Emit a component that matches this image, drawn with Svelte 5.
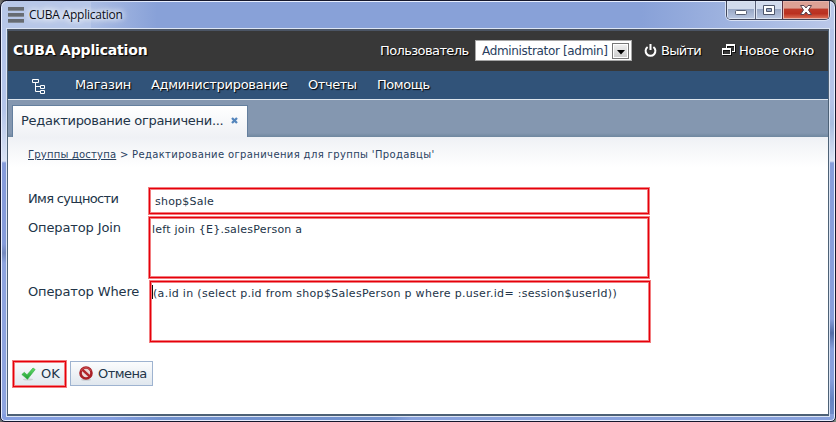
<script>
  const menu = [
    { label: 'Магазин', width: 76, spacing: -0.25 },
    { label: 'Администрирование', width: 157, spacing: -0.28 },
    { label: 'Отчеты', width: 69, spacing: -0.45 },
    { label: 'Помощь', width: 60, spacing: -0.45 }
  ];
</script>

<div class="desktop">
  <div class="window">
    <header class="titlebar">
      <div class="burger"><i></i><i></i><i></i></div>
      <span class="caption">CUBA Application</span>
      <div class="controls">
        <div class="ctl min"><svg width="14" height="14"><rect x="1.5" y="7.5" width="11" height="4" rx="1" fill="#fff" stroke="#555d70" /></svg></div>
        <div class="ctl max"><svg width="14" height="14"><path fill="#fff" stroke="#4e566b" fill-rule="evenodd" d="M1.5 2.5h11v9h-11zM4.5 5.5v3h5v-3z" /></svg></div>
        <div class="ctl close"><svg width="14" height="14"><path fill="#fff" stroke="#594450" stroke-linejoin="round" d="M1.5 2.5H5L7 5l2-2.500h3.500L9.500 7l3 4.500H9L7 9l-2 2.500H1.500L4.500 7z" /></svg></div>
      </div>
    </header>
    <main class="client">
      <div class="head">
        <strong>CUBA Application</strong>
        <span class="userlabel">Пользователь</span>
        <div class="select">
          <span>Administrator [admin]</span>
          <div class="arrow"><svg width="8" height="5"><path d="M0 0h8L4 4.500z" fill="#000" /></svg></div>
        </div>
        <svg class="power" width="13" height="15" fill="none" stroke="#fff" stroke-width="2"><path d="M3.600 4A4.900 4.900 0 1 0 9.400 4M6.500 1v6" /></svg>
        <span class="logout">Выйти</span>
        <svg class="newicon" width="14" height="12" fill="#fff" fill-rule="evenodd"><path d="M4 0h9v8h-3V7h2V2H5v2H4z" /><path d="M0 4h9v7H0zM1 6v4h7V6z" /></svg>
        <span class="newwin">Новое окно</span>
      </div>
      <nav>
        <svg class="tree" width="14" height="16" fill="none" stroke="#fff"><path d="M.5 1.500h6v3h-6zM3.500 4.500v9h5M3.500 8.500h5M8.500 7.500h4v3h-4zM8.500 12.500h4v3h-4z" /></svg>
        {#each menu as item}
          <span style="width: {item.width}px; letter-spacing: {item.spacing}px">{item.label}</span>
        {/each}
      </nav>
      <div class="tabs">
        <div class="tab">
          <span>Редактирование ограничени...</span>
          <svg width="7" height="7"><path d="M1 1l5 5M6 1L1 6" stroke="#5485bc" stroke-width="2.300" /></svg>
        </div>
      </div>
      <section class="editor">
        <div class="crumbs"><u>Группы доступа</u><b>&gt;</b><span>Редактирование ограничения для группы 'Продавцы'</span></div>
        <div class="row entity"><label for="entity">Имя сущности</label><div id="entity" class="field">shop$Sale</div></div>
        <div class="row join"><label for="join">Оператор Join</label><div id="join" class="field">left join &#123;E&#125;.salesPerson a</div></div>
        <div class="row where"><label for="where">Оператор Where</label><div id="where" class="field"><i class="caret"></i><span>(a.id in (select p.id from shop$SalesPerson p where p.user.id= :session$userId))</span></div></div>
        <div class="actions">
          <div class="btn ok">
            <svg width="15" height="14"><defs><linearGradient id="g" x2="0" y2="1"><stop stop-color="#66dc6c" /><stop offset="1" stop-color="#1d9e32" /></linearGradient></defs><ellipse cx="7" cy="12.500" rx="5" ry="1" fill="#ccd1d5" /><path d="M.8 7.500L3.300 5.300 6 7.800 12 1 14.200 2.500 6.500 12.300z" fill="url(#g)" stroke="#32ad42" stroke-width=".6" /></svg>
            <span>OK</span>
          </div>
          <div class="btn cancel">
            <svg width="15" height="15"><ellipse cx="7" cy="13.800" rx="5" ry="1" fill="#c8ccd1" /><circle cx="7" cy="7" r="5.500" fill="#ead8d8" stroke="#a91f25" stroke-width="2.600" /><path d="M3.300 3.600l7.400 6.800" stroke="#b3262b" stroke-width="2.500" /><path d="M1.800 5a5.700 5.700 0 0 1 10.400 0" fill="none" stroke="#d6605f" stroke-width=".8" /></svg>
            <span>Отмена</span>
          </div>
        </div>
      </section>
    </main>
  </div>
</div>

<style>
  :global(body) { margin: 0; }
  * { box-sizing: border-box; }
  svg { display: block; flex: none; }
  span, label, strong, u { white-space: nowrap; }
  .desktop { width: 836px; height: 422px; background: linear-gradient(90deg, #777, #111 8px, #111 828px, #8a958a); overflow: hidden; font: 13px "DejaVu Sans", Verdana, sans-serif; color: #223448; }
  .window {
    height: 422px; border: 1px solid #15182c; border-radius: 7px 7px 5px 5px; padding: 0 6px 6px; overflow: hidden;
    box-shadow: inset 0 0 0 1px #e8efff;
    background:
      linear-gradient(90deg, #849ee0 0 110px, #7090cd 160px 390px, #88a1dc 410px) 0 100% / 100% 7px no-repeat,
      linear-gradient(180deg, #b4c5e9 0 80px, #d9e2f4 132px, #859cda 134px 215px, #7489bd 224px, #8da4df 234px) 0 28px / 7px 100% no-repeat,
      linear-gradient(180deg, #b5c4e8 0 70px, #a9bde0 95px, #dce4f4 132px, #879edb 134px 290px, #526ca7 304px, #87a0dd 320px 350px, #6684c2 370px, #88a1dc) 100% 28px / 7px 100% no-repeat,
      linear-gradient(135deg, #88a1d8 0 218px, #7891c6 232px) 90px 0 / 262px 28px no-repeat,
      linear-gradient(90deg, #b7c7e8 0 90px, #8199ce 145px, #88a1d8 165px 640px, #afc0e5 790px, #bbc8e9);
  }
  .titlebar { height: 28px; display: flex; align-items: flex-start; background: linear-gradient(90deg, #b7c7e8 60px, #b7c7e800 150px); }
  .burger { width: 16px; margin: 6px 0 0 1px; display: flex; flex-direction: column; gap: 2px; }
  .burger i { height: 4px; background: #666b72; border-bottom: 1px solid #838a94; }
  .caption { color: #0b0e18; font: 12px/18px "Open Sans", "Noto Sans", sans-serif; letter-spacing: -.23px; margin: 5px 0 0 5px; text-shadow: 0 0 9px #fff, 0 0 7px #fff, 0 0 5px #e8effb; }
  .controls { margin: 0 -1px 0 auto; width: 104px; height: 19px; display: flex; border: 1px solid #40465b; border-top: 0; border-radius: 0 0 5px 5px; overflow: hidden; box-shadow: 0 0 0 1px #d8e1f4; }
  .ctl { width: 28px; display: flex; align-items: center; justify-content: center; background: linear-gradient(#d2dbed 0 44%, #98a7c5 46%, #bac8e2); box-shadow: inset 0 0 0 1px #dce4f2; }
  .max { width: 27px; border-left: 1px solid #596079; }
  .close { width: 47px; border-left: 1px solid #5a3042; background: linear-gradient(#dca195 0 40%, #bd3929 44%, #ba3020 70%, #df765c); box-shadow: inset 0 0 0 1px #e6b4ac; }
  .client { width: 822px; height: 387px; border: 1px solid #4d6176; border-top: 2px solid #4b5565; border-bottom-width: 2px; outline: 1px solid #dce5f4; background: #fff; }
  .head { height: 40px; padding-bottom: 1px; display: flex; align-items: center; background: #383838; color: #fff; text-shadow: 1px 1px 1px #000; }
  strong { width: 367px; padding: 0 0 2px 5px; font-size: 14px; letter-spacing: -.18px; }
  .userlabel { width: 100px; padding-left: 5px; letter-spacing: -.6px; }
  .select { width: 157px; height: 21px; border: 1px solid #a7a7a7; background: #fff; color: #29405e; display: flex; align-items: center; text-shadow: none; font-size: 12px; padding: 0 2px 0 6px; justify-content: space-between; letter-spacing: -.33px; }
  .arrow { width: 17px; height: 16px; border: 1px solid #777; box-shadow: inset 0 0 0 1px #fff; background: linear-gradient(#f3f3f3, #cacaca); display: flex; align-items: center; justify-content: center; padding-top: 3px; }
  .power { margin-left: 12px; }
  .logout { margin-left: 4px; width: 61px; letter-spacing: -.75px; }
  .newicon { margin-top: -1px; filter: drop-shadow(1px 1px 0 #111); }
  .newwin { margin-left: 3px; letter-spacing: -.28px; }
  nav { height: 29px; border-bottom: 1px solid #dce4ec; background: #315379; color: #fff; display: flex; align-items: center; padding-left: 24px; text-shadow: 1px 1px 1px #000; }
  nav span { padding-bottom: 2px; }
  .tree { margin: 1px 29px 0 0; }
  .tabs { height: 37px; padding: 5px 0 0 4px; background: linear-gradient(#8497b0 33px, #6f879f 37px); }
  .tab { width: 236px; height: 32px; background: linear-gradient(#fff, #eff1f5); border: solid #647f9e; border-width: 1px 1px 0; display: flex; align-items: center; padding: 0 9px 2px 8px; justify-content: space-between; letter-spacing: -.29px; }
  .editor { height: 277px; background: linear-gradient(#eff1f5, #fff 30px); padding: 11px 4px 0; }
  .crumbs { height: 39px; padding-left: 16px; display: flex; font-size: 10px; line-height: 14px; color: #29415f; }
  .crumbs u { width: 88px; letter-spacing: .2px; }
  .crumbs b { font-weight: 400; width: 16px; padding-left: 4px; }
  .crumbs span { letter-spacing: .37px; }
  .row { display: flex; align-items: flex-start; padding-left: 16px; }
  .row label { width: 120px; line-height: 16px; padding-top: 4px; letter-spacing: -.13px; }
  .entity label { letter-spacing: -.66px; }
  .entity { height: 29px; }
  .join { height: 64px; }
  .where { height: 80px; }
  .field { width: 502px; border: 1px solid #f27d80; box-shadow: inset 0 0 0 1px #e6000a, inset 0 0 0 2px #f27d80; font-size: 11px; line-height: 15px; padding: 5px 3px; display: flex; letter-spacing: .22px; }
  .entity .field { height: 28px; padding: 6px; }
  .join .field { height: 63px; }
  .where .field { height: 63px; margin-left: 1px; padding-left: 2px; letter-spacing: .3px; }
  .caret { width: 1px; height: 14px; background: #111; margin: -1px 0 0 0; }
  .actions { display: flex; gap: 3px; align-items: flex-start; }
  .btn { height: 25px; display: flex; align-items: center; border: 1px solid #9eb3d0; background: linear-gradient(#fbfcfd, #e0e7ee); }
  .ok { width: 55px; height: 28px; border: 1px solid #f27d80; padding: 0 0 1px 8px; gap: 5px; box-shadow: inset 0 0 0 1px #e6000a, inset 0 0 0 2px #f27d80; }
  .cancel { width: 83px; margin-top: 1px; padding-left: 8px; gap: 4px; letter-spacing: -.55px; }
</style>
